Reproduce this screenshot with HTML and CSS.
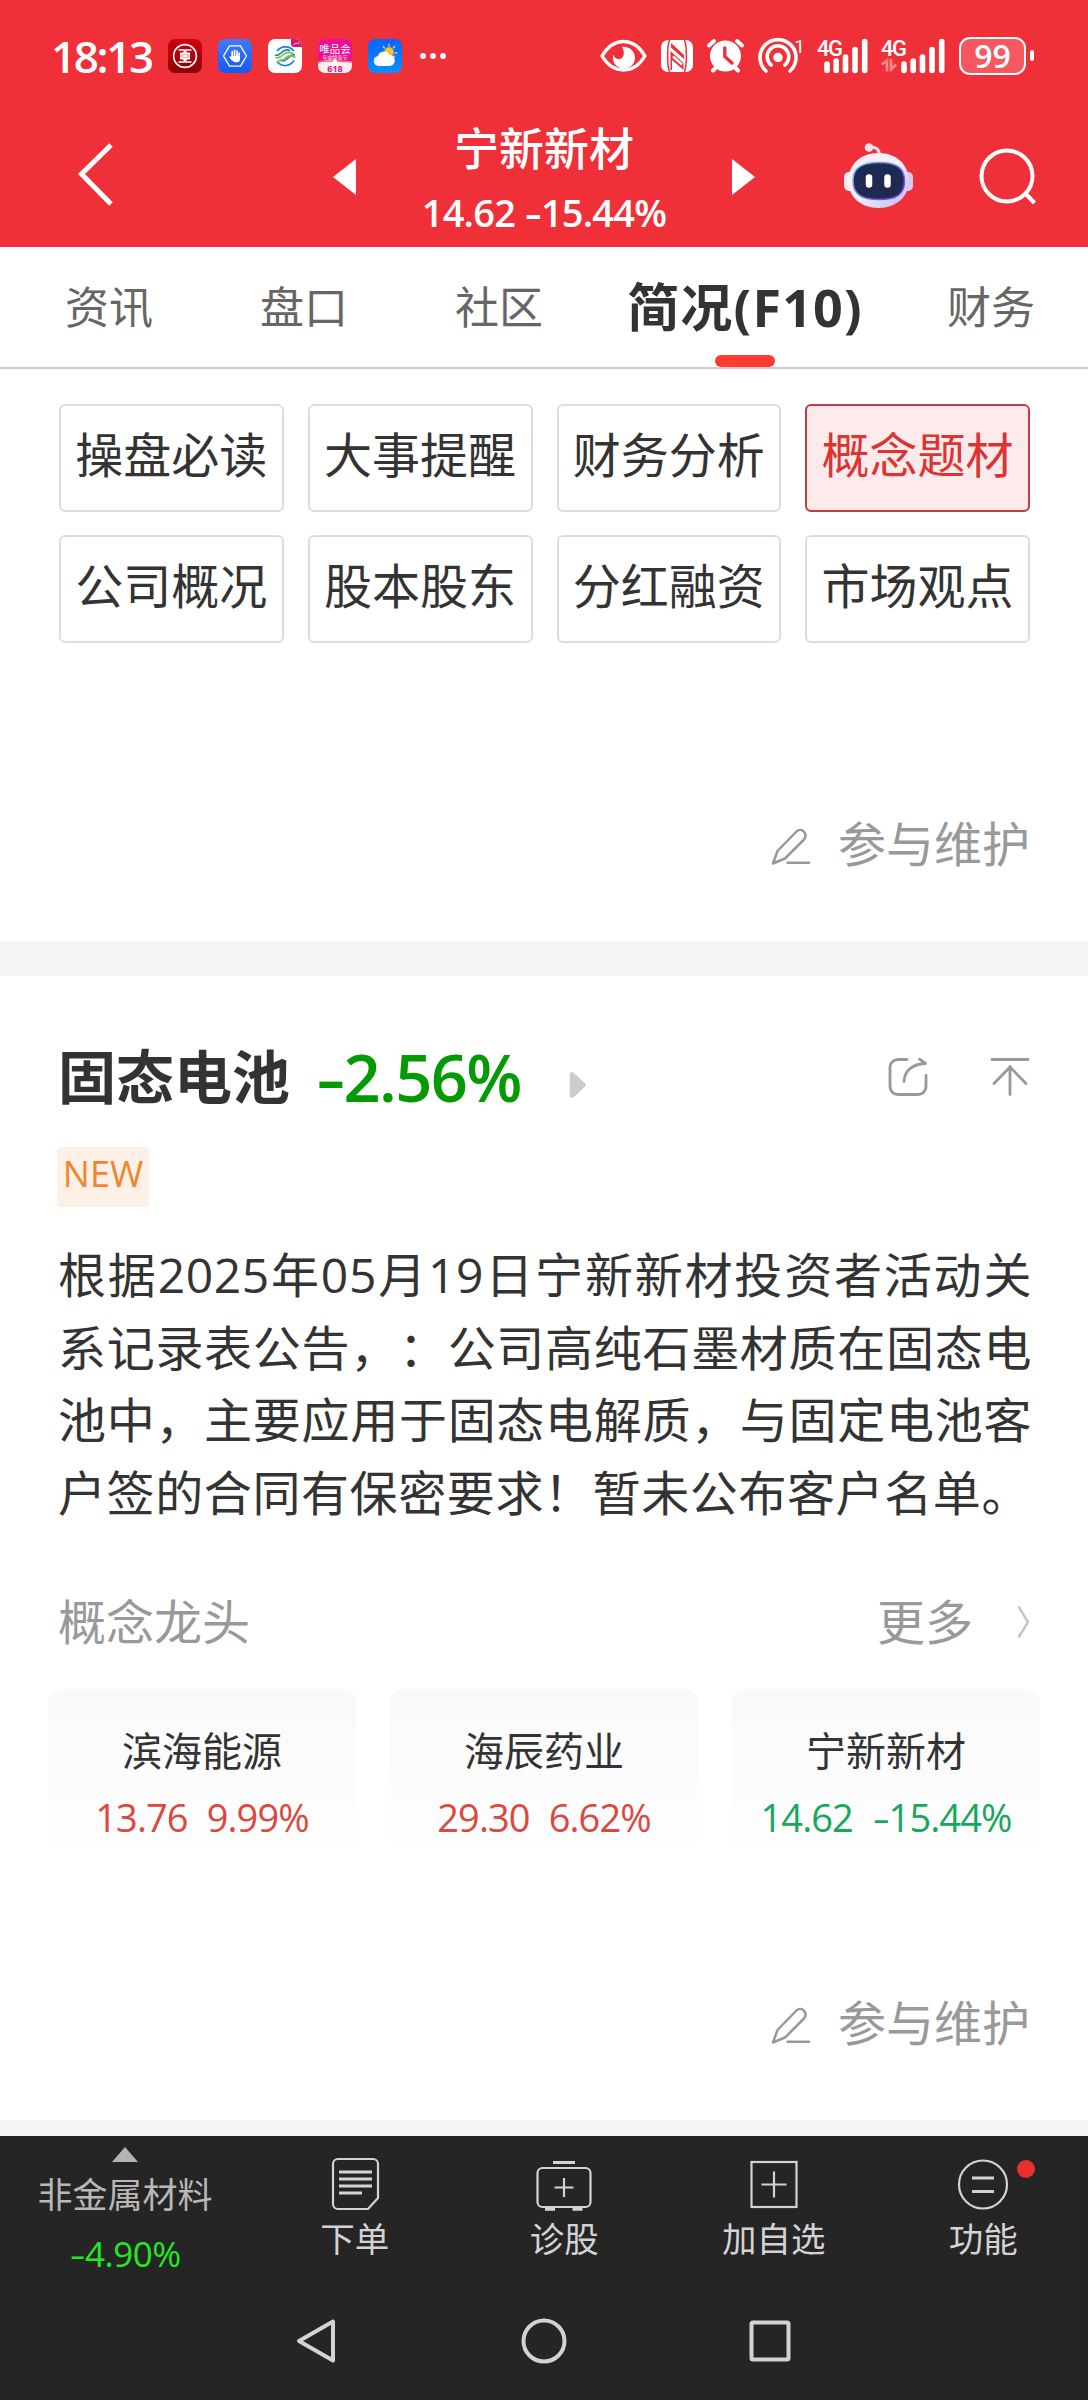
FILE: index.html
```html
<!DOCTYPE html>
<html lang="zh-CN">
<head>
    <meta charset="UTF-8">
    <meta name="viewport" content="width=device-width, initial-scale=1.0">
    <title>宁新新材 - 简况(F10)</title>
    <link rel="stylesheet" href="styles.css">
</head>
<body>
    <header class="header">
        <div class="status-bar">
            <span class="time">18:13</span>
            <div class="apps">
                <!-- bank -->
                <svg width="34" height="34" viewBox="0 0 34 34">
                    <defs><linearGradient id="bank" x1="0" y1="0" x2="0" y2="1"><stop offset="0" stop-color="#d0000f"/><stop offset="1" stop-color="#8c0003"/></linearGradient></defs>
                    <rect width="34" height="34" rx="7" fill="url(#bank)"/>
                    <circle cx="17" cy="17" r="11.4" fill="none" stroke="#fff" stroke-width="1.6"/>
                    <path d="M10.500 11h5.700v3.300h-3.500v1.700h3.500v2h-3.500v1.700h3.500V23h-5.700M23.500 11h-5.700v3.300h3.500v1.700h-3.500v2h3.500v1.700h-3.500V23h5.700" fill="none" stroke="#fff" stroke-width="1.500"/>
                </svg>
                <!-- blocker -->
                <svg width="34" height="34" viewBox="0 0 34 34">
                    <defs><linearGradient id="block" x1="0" y1="0" x2="0" y2="1"><stop offset="0" stop-color="#3f7bf5"/><stop offset="1" stop-color="#155af0"/></linearGradient></defs>
                    <rect width="34" height="34" rx="7" fill="url(#block)"/>
                    <path d="M11.5 6.8h11L28.5 17l-6 10.2h-11L5.500 17z" fill="none" stroke="#fff" stroke-width="1.3" stroke-linejoin="round"/>
                    <path d="M14.200 18v-5.500M16.600 17v-5.600M19 17v-5M21.100 18v-3.800M12.300 18.200l2 2.500" fill="none" stroke="#fff" stroke-width="1.7" stroke-linecap="round"/>
                    <path d="M13.400 17h8.600v3.200c0 1.800-1.300 3-3 3h-1.500c-1.500 0-2.800-1-4.100-3z" fill="#fff"/>
                </svg>
                <!-- mobile carrier -->
                <svg width="34" height="34" viewBox="0 0 34 34">
                    <rect width="34" height="34" rx="7" fill="#fff"/>
                    <path d="M23 0h4a7 7 0 0 1 7 7v1h-8a3 3 0 0 1-3-3z" fill="#d6147c"/>
                    <path d="M25.500 5.500l3-1.500 1 1 2-2" fill="none" stroke="#ffc5e3" stroke-width="1"/>
                    <path d="M9 12c4-5 12-6 17 0M7 16c2 1 4 0 6-2 3-3 6-4 9-2M9 22.500c5 6 13 5 17-1M12 21c4 2 6 0 8-2s4-4 7-3" fill="none" stroke="#1a86c8" stroke-width="1.700"/>
                    <path d="M7.500 18.500c3 1 5 0 8-3s6-3 10-.5M10 21.500c4 1 6-1 8-3 3-3 6-2 9.500 0" fill="none" stroke="#7fc142" stroke-width="1.700"/>
                </svg>
                <!-- shopping -->
                <svg width="34" height="34" viewBox="0 0 34 34">
                    <rect width="34" height="34" rx="7" fill="#f10c96"/>
                    <path d="M0 24q9-5 17-3t17 1v5a7 7 0 0 1-7 7H7a7 7 0 0 1-7-7z" fill="#fff0ee"/>
                    <path d="M0 23q10-2 34 0" fill="none" stroke="#ff6d5c" stroke-width="1.500"/>
                    <path d="M17 19l4 6h-8z" fill="#fff"/>
                    <text x="17" y="13.500" class="vip-name">唯品会</text>
                    <text x="17" y="20" class="vip-sub">年中特卖节</text>
                    <text x="17" y="32.500" class="vip-sale">618</text>
                </svg>
                <!-- weather -->
                <svg width="34" height="34" viewBox="0 0 34 34">
                    <defs><linearGradient id="sky" x1="0" y1="0" x2="0" y2="1"><stop offset="0" stop-color="#0864ff"/><stop offset="1" stop-color="#0a8fff"/></linearGradient></defs>
                    <rect width="34" height="34" rx="7" fill="url(#sky)"/>
                    <circle cx="21" cy="13" r="4.700" fill="#ffc229"/>
                    <path d="M21 7.200V5.200M16.500 9l-1.300-1.500M25.200 9l1.500-1.500M27 14h1.800M25.500 17l1 .9" stroke="#ffd23c" stroke-width="1.300" stroke-linecap="round"/>
                    <path d="M10.500 27a5 5 0 0 1-.6-9.900 6.500 6.500 0 0 1 11.900-1.200A5.600 5.600 0 0 1 22 27z" fill="#fff"/>
                </svg>
            </div>
            <svg class="dots" width="26" height="6" viewBox="0 0 26 6" fill="#fff"><circle cx="3" cy="3" r="2.900"/><circle cx="13" cy="3" r="2.900"/><circle cx="23" cy="3" r="2.900"/></svg>
            <div class="signals">
                <!-- eye comfort -->
                <svg width="47" height="38" viewBox="0 0 47 38">
                    <path d="M2 19C8 9 15 4.500 23.500 4.500S39 9 45 19C39 29 32 33 23.500 33S8 29 2 19z" fill="none" stroke="#fff" stroke-width="3.400" stroke-linejoin="round"/>
                    <path d="M22 10a11 11 0 1 1-8.500 7.500c1 4 3.500 5 6 4.500 5-1 5.500-7 2.500-12z" fill="#fff"/>
                </svg>
                <!-- nfc -->
                <svg width="32" height="38" viewBox="0 0 32 38">
                    <rect y="3" width="32" height="32" rx="7" fill="#fff"/>
                    <path d="M8.500 35C6 28 6 10 8.500 3M23.500 3C26 10 26 28 23.500 35" fill="none" stroke="#f03038" stroke-width="1.500"/>
                    <path d="M10 6l13 12v4L10 10.500zM9.500 14l13 12v7L11 23v10H9.500z" fill="#f03038"/>
                    <path d="M12 19.500l9 8" stroke="#fff" stroke-width="2.500"/>
                </svg>
                <!-- alarm -->
                <svg width="37" height="38" viewBox="0 0 37 38">
                    <circle cx="18.500" cy="19" r="15.500" fill="#fff"/>
                    <path d="M2 8.500L7 4M35 8.500L30 4M6 33.500l4-4M31 33.500l-4-4" stroke="#fff" stroke-width="4" stroke-linecap="round"/>
                    <path d="M17.800 11v8.500l7.200 6.500" fill="none" stroke="#f03038" stroke-width="3.400" stroke-linecap="round"/>
                </svg>
                <!-- hotspot -->
                <svg width="47" height="38" viewBox="0 0 47 38">
                    <g fill="none" stroke="#fff" stroke-width="3.600" stroke-linecap="round">
                        <path d="M8 34A18 18 0 1 1 32 34"/>
                        <path d="M13.200 28A10.800 10.800 0 1 1 26.800 28"/>
                    </g>
                    <circle cx="20" cy="20.500" r="4.700" fill="#fff"/>
                    <text x="41.500" y="16" class="hot-count">1</text>
                </svg>
                <svg class="sig1" width="51" height="38" viewBox="0 0 51 38">
                    <text x="0" y="18.500" class="net">4G</text>
                    <path d="M10 27v6.500M19.200 24v9.500M28.500 20v13.500M38 12.500v21M47.700 4.500v29" stroke="#fff" stroke-width="5.600" stroke-linecap="round"/>
                </svg>
                <svg width="64" height="38" viewBox="0 0 64 38">
                    <text x="0" y="18.500" class="net">4G</text>
                    <path d="M1 27.500l5-4v11M15 27.500l-5 5v-10.500" fill="none" stroke="#f9888c" stroke-width="2.600"/>
                    <path d="M23 27v6.500M32.200 24v9.500M41.500 20v13.500M51 12.500v21M60.700 4.500v29" stroke="#fff" stroke-width="5.600" stroke-linecap="round"/>
                </svg>
                <div class="battery">99</div>
            </div>
        </div>
        <div class="nav-bar">
            <svg class="back" width="36" height="64" viewBox="0 0 36 64"><path d="M33 2L3.500 31 33 61" fill="none" stroke="#fff" stroke-width="5"/></svg>
            <svg class="prev" width="23" height="36" viewBox="0 0 23 36"><path d="M0 18L23 0v36z" fill="#fff"/></svg>
            <div class="stock">
                <div class="stock-name">宁新新材</div>
                <div class="stock-price">14.62 <i>-</i>15.44%</div>
            </div>
            <svg class="next" width="23" height="36" viewBox="0 0 23 36"><path d="M23 18L0 0v36z" fill="#fff"/></svg>
            <svg class="robot" width="70" height="66" viewBox="0 0 70 66">
                <defs>
                    <linearGradient id="shell" x1="0" y1="0" x2="1" y2="1"><stop offset="0" stop-color="#fdeef2"/><stop offset=".5" stop-color="#f3eefc"/><stop offset="1" stop-color="#b9baf3"/></linearGradient>
                    <linearGradient id="rim" x1="0" y1="0" x2="1" y2="1"><stop offset="0" stop-color="#67c6ea"/><stop offset="1" stop-color="#7a31dd"/></linearGradient>
                </defs>
                <path d="M26 4.500c6-1 9.500 2 9.500 8" fill="none" stroke="#fbdfe7" stroke-width="3"/>
                <circle cx="25" cy="4.500" r="4.300" fill="#fbdfe7"/>
                <rect x="0" y="29" width="12" height="19" rx="5" fill="#f7e9f5"/>
                <rect x="57" y="29" width="12" height="19" rx="5" fill="#d5c8f3"/>
                <path d="M34.500 10C52 10 64 21 65 37c0 17-13 28-30.500 28S4 54 4 37C5 21 17 10 34.500 10z" fill="url(#shell)"/>
                <path d="M35 19.500c17 0 25.500 5 25.500 18.500S52 56.500 35 56.500 9 51.500 9 38s9-18.500 26-18.500z" fill="#1f2a52" stroke="url(#rim)" stroke-width="1.500"/>
                <path d="M25 34.500v7M43.500 34.500v7" stroke="#fff" stroke-width="6.500" stroke-linecap="round"/>
            </svg>
            <svg class="search" width="58" height="60" viewBox="0 0 58 60"><g fill="none" stroke="#fff" stroke-width="4"><circle cx="28" cy="29" r="25.500"/><path d="M46 46l9.500 10"/></g></svg>
        </div>
    </header>

    <nav class="tabs">
        <a class="tab">资讯</a>
        <a class="tab">盘口</a>
        <a class="tab">社区</a>
        <a class="tab active">简况(F10)</a>
        <a class="tab">财务</a>
    </nav>

    <section class="menu">
        <div class="chips">
            <a class="chip">操盘必读</a>
            <a class="chip">大事提醒</a>
            <a class="chip">财务分析</a>
            <a class="chip on">概念题材</a>
            <a class="chip">公司概况</a>
            <a class="chip">股本股东</a>
            <a class="chip">分红融资</a>
            <a class="chip">市场观点</a>
        </div>
        <div class="maintain">
            <svg width="40" height="38" viewBox="0 0 40 38"><g fill="none" stroke="#999" stroke-width="2.500" stroke-linecap="round" stroke-linejoin="round"><path d="M2 35.500L6.500 23 25.500 3.500c5-4.500 12 2 7.500 8L14 30.500z"/><path d="M16.500 34.700h21.500"/></g></svg>
            <span>参与维护</span>
        </div>
    </section>

    <section class="concept">
        <div class="concept-head">
            <h2>固态电池</h2>
            <span class="change"><i>-</i>2.56%</span>
            <svg class="play" width="17" height="28" viewBox="0 0 17 28"><path d="M3 3.500v21L14.500 14z" fill="#ccc" stroke="#ccc" stroke-width="4.500" stroke-linejoin="round"/></svg>
            <svg class="share" width="40" height="40" viewBox="0 0 40 40"><g fill="none" stroke="#999" stroke-width="2.800" stroke-linecap="round" stroke-linejoin="round"><path d="M19 2.500H10a8 8 0 0 0-8 8v19a8 8 0 0 0 8 8h20a8 8 0 0 0 8-8V18.500"/><path d="M16 24.500C16.500 14 24 7 37.500 6.500L31.500 2.200"/></g></svg>
            <svg class="to-top" width="40" height="40" viewBox="0 0 40 40"><path d="M2 2.500h36M20 37.500V9.500M4 26.500l16-16.500 16 16.500" fill="none" stroke="#999" stroke-width="2.800" stroke-linecap="round" stroke-linejoin="round"/></svg>
        </div>
        <div class="tag">NEW</div>
        <p class="desc">根据2025年05月19日宁新新材投资者活动关系记录表公告，：公司高纯石墨材质在固态电池中，主要应用于固态电解质，与固定电池客户签的合同有保密要求！暂未公布客户名单。</p>
        <div class="leader-head">
            <span>概念龙头</span>
            <span class="more">更多</span>
            <svg width="13" height="34" viewBox="0 0 13 34"><path d="M1.500 1.500L11 17 1.500 32.500" fill="none" stroke="#c4c4c4" stroke-width="2.400"/></svg>
        </div>
        <div class="leaders">
            <div class="leader">
                <div class="leader-name">滨海能源</div>
                <div class="leader-value up"><span>13.76</span><span>9.99%</span></div>
            </div>
            <div class="leader">
                <div class="leader-name">海辰药业</div>
                <div class="leader-value up"><span>29.30</span><span>6.62%</span></div>
            </div>
            <div class="leader">
                <div class="leader-name">宁新新材</div>
                <div class="leader-value down"><span>14.62</span><span><i>-</i>15.44%</span></div>
            </div>
        </div>
        <div class="maintain">
            <svg width="40" height="38" viewBox="0 0 40 38"><g fill="none" stroke="#999" stroke-width="2.500" stroke-linecap="round" stroke-linejoin="round"><path d="M2 35.500L6.500 23 25.500 3.500c5-4.500 12 2 7.500 8L14 30.500z"/><path d="M16.500 34.700h21.500"/></g></svg>
            <span>参与维护</span>
        </div>
    </section>

    <footer class="footer">
        <div class="toolbar">
            <div class="sector">
                <svg width="26" height="15" viewBox="0 0 26 15"><path d="M13 0l13 15H0z" fill="#b3b3b3"/></svg>
                <div class="sector-name">非金属材料</div>
                <div class="sector-change"><i>-</i>4.90%</div>
            </div>
            <a class="tool">
                <svg width="56" height="56" viewBox="0 0 56 56" fill="none" stroke="#d3d3d3" stroke-width="2.200"><path d="M11 3h35a5 5 0 0 1 5 5v34l-10 11h-30a5 5 0 0 1-5-5V8a5 5 0 0 1 5-5z"/><path d="M12 16h33M12 23h33M12 30h33M12 37h23" stroke-width="2.800"/></svg>
                <span>下单</span>
            </a>
            <a class="tool">
                <svg width="56" height="56" viewBox="0 0 56 56" fill="none" stroke="#d3d3d3" stroke-width="2.200"><rect x="1.500" y="12" width="53" height="39" rx="5"/><path d="M17 6.500h22" stroke-width="3"/><path d="M9 53h10M36.500 53h10" stroke-width="3.500"/><path d="M28 22v19M18.500 31.500h19"/></svg>
                <span>诊股</span>
            </a>
            <a class="tool">
                <svg width="56" height="56" viewBox="0 0 56 56" fill="none" stroke="#d3d3d3" stroke-width="2.200"><rect x="5.500" y="6" width="45" height="45"/><path d="M28 15.500v26M15.500 28.500h25"/></svg>
                <span>加自选</span>
            </a>
            <a class="tool">
                <svg width="56" height="56" viewBox="0 0 56 56" fill="none" stroke="#d3d3d3" stroke-width="2.200"><circle cx="28" cy="28.500" r="24"/><path d="M17 22h22M17 35.500h22" stroke-width="2.800"/></svg>
                <span>功能</span>
                <b class="badge"></b>
            </a>
        </div>
        <div class="system-keys">
            <svg width="46" height="48" viewBox="0 0 46 48"><path d="M38 4.500v39L4 24z" fill="none" stroke="#d3d3d3" stroke-width="4" stroke-linejoin="round"/></svg>
            <svg width="46" height="48" viewBox="0 0 46 48"><circle cx="23" cy="24" r="20.500" fill="none" stroke="#d3d3d3" stroke-width="4"/></svg>
            <svg width="46" height="48" viewBox="0 0 46 48"><rect x="4.500" y="5.500" width="37" height="37" rx="1.500" fill="none" stroke="#d3d3d3" stroke-width="4"/></svg>
        </div>
    </footer>
</body>
</html>
```

FILE: styles.css
```css
* {
    box-sizing: border-box;
}

body {
    margin: 0;
    width: 1088px;
    height: 2400px;
    overflow: hidden;
    font-family: "Open Sans", "Noto Sans CJK SC", sans-serif;
    color: #333;
    background: #fff;
}

svg {
    display: block;
    flex: none;
}

/* wide minus sign */
i {
    display: inline-block;
    font-style: normal;
    transform: scaleX(1.4);
    margin: 0 .07em;
}

/* header */
.header {
    height: 247px;
    background: #f03038;
    color: #fff;
}

.status-bar {
    display: flex;
    align-items: center;
    height: 112px;
    padding: 0 54px 0 51px;
}

.time {
    width: 117px;
    font-size: 44px;
    font-weight: 600;
    letter-spacing: -2.4px;
    line-height: 60px;
    white-space: nowrap;
}

.apps {
    display: flex;
    gap: 16px;
}

.vip-name,
.vip-sub,
.vip-sale {
    fill: #fff;
    text-anchor: middle;
    font-size: 10.5px;
}

.vip-sub {
    font-size: 5px;
}

.vip-sale {
    fill: #d6118a;
    font-size: 9px;
    font-weight: 700;
}

.dots {
    margin-left: 18px;
}

.signals {
    display: flex;
    align-items: center;
    gap: 14px;
    margin-left: auto;
}

.sig1 {
    margin: 0 -1px 0 -2px;
}

.net {
    fill: #fff;
    font-family: Roboto, sans-serif;
    font-size: 22px;
    font-weight: 500;
    letter-spacing: -1.5px;
}

.hot-count {
    fill: #fff;
    font-family: Roboto, sans-serif;
    font-size: 19px;
    text-anchor: middle;
}

.battery {
    position: relative;
    width: 67px;
    height: 38px;
    margin-right: 8px;
    border: 2.500px solid #fff;
    border-radius: 11px;
    background: #f5595f;
    font-size: 32px;
    font-weight: 600;
    line-height: 33px;
    text-align: center;
}

.battery::after {
    content: "";
    position: absolute;
    right: -10px;
    top: 11px;
    width: 4px;
    height: 11px;
    border-radius: 2px;
    background: #fff;
}

.nav-bar {
    display: flex;
    align-items: flex-start;
    height: 135px;
    padding-left: 78px;
}

.back {
    margin-top: 31px;
}

.prev {
    margin: 47px 0 0 219px;
}

.next {
    margin-top: 47px;
}

.stock {
    width: 376px;
    padding-top: 5px;
    text-align: center;
    white-space: nowrap;
}

.stock-name {
    font-size: 45px;
    font-weight: 500;
    line-height: 64px;
}

.stock-price {
    font-size: 38px;
    font-weight: 600;
    letter-spacing: -.8px;
    line-height: 62px;
}

.robot {
    margin: 31px 0 0 89px;
}

.search {
    margin: 35px 0 0 65px;
}

/* tabs */
.tabs {
    display: flex;
    align-items: center;
    gap: 107px;
    height: 122px;
    padding-left: 65px;
    border-bottom: 2px solid #ccc;
}

.tab {
    position: relative;
    color: #666;
    font-size: 44px;
    line-height: 120px;
    white-space: nowrap;
}

.tab.active {
    width: 238px;
    margin: 0 -24px;
    color: #333;
    font-size: 52px;
    font-weight: 700;
    letter-spacing: 1.2px;
    text-align: center;
}

.tab.active::after {
    content: "";
    position: absolute;
    left: 50%;
    bottom: 0;
    width: 60px;
    height: 12px;
    margin-left: -30px;
    border-radius: 6px;
    background: #fc3b31;
}

/* menu */
.menu {
    height: 572px;
    padding: 35px 58px 0 59px;
}

.chips {
    display: grid;
    grid-template-columns: repeat(4, 1fr);
    gap: 23px 24px;
}

.chip {
    height: 108px;
    border: 2px solid #ddd;
    border-radius: 6px;
    font-size: 48px;
    line-height: 98px;
    text-align: center;
    white-space: nowrap;
}

.chip.on {
    border-color: #c23c41;
    background: #fdeaea;
    color: #dd3333;
}

.maintain {
    display: flex;
    align-items: center;
    justify-content: flex-end;
    gap: 27px;
    margin-top: 171px;
    color: #999;
    font-size: 48px;
    line-height: 60px;
}

.maintain svg {
    margin-top: 6px;
}

/* concept */
.concept {
    height: 1195px;
    border-top: 35px solid #f4f4f4;
    border-bottom: 16px solid #f4f4f4;
    padding: 68px 58px 0;
}

.concept-head {
    display: flex;
    align-items: center;
    height: 66px;
}

.concept-head h2 {
    margin: 0;
    font-size: 58px;
    font-weight: 700;
    line-height: 66px;
}

.change {
    width: 211px;
    margin-left: 25px;
    color: #039a03;
    font-size: 65px;
    font-weight: 600;
    letter-spacing: -1.6px;
    line-height: 66px;
    white-space: nowrap;
}

.play {
    margin: 15px 0 0 43px;
}

.share {
    margin-left: auto;
}

.to-top {
    margin-left: 62px;
}

.tag {
    width: 92px;
    height: 60px;
    margin: 37px 0 0 -1px;
    border-radius: 4px;
    background: #fff0e6;
    color: #ef8632;
    font-size: 36px;
    line-height: 53px;
    text-align: center;
}

.desc {
    margin: 32px -2px 0 0;
    font-size: 48px;
    letter-spacing: .6px;
    line-height: 72.700px;
    text-align: justify;
    text-spacing-trim: space-all;
}

.leader-head {
    display: flex;
    align-items: center;
    margin-top: 62px;
    color: #999;
    font-size: 48px;
    line-height: 60px;
}

.more {
    margin: 0 44px 0 auto;
}

.leaders {
    display: grid;
    grid-template-columns: repeat(3, 1fr);
    gap: 34px;
    margin: 37px -10px 0;
}

.leader {
    height: 176px;
    padding-top: 33px;
    border-radius: 14px 14px 0 0;
    background: linear-gradient(#f9f9f9, #fff);
    text-align: center;
}

.leader-name {
    font-size: 40px;
    line-height: 58px;
}

.leader-value {
    display: flex;
    justify-content: center;
    gap: 19px;
    font-size: 38px;
    letter-spacing: -.9px;
    line-height: 74px;
    white-space: nowrap;
}

.up {
    color: #dc4840;
}

.down {
    color: #13a85a;
}

.concept .maintain {
    margin-top: 128px;
}

/* footer */
.footer {
    height: 264px;
    background: #252525;
    color: #d3d3d3;
}

.toolbar {
    display: flex;
    height: 159px;
}

.sector {
    display: flex;
    flex-direction: column;
    align-items: center;
    width: 250px;
    padding-top: 11px;
    color: #b8b8b8;
    font-size: 35px;
}

.sector-name {
    margin-top: 9px;
    line-height: 48px;
}

.sector-change {
    margin-top: 10px;
    color: #23e823;
    letter-spacing: -.5px;
    line-height: 50px;
}

.tool {
    position: relative;
    display: flex;
    flex: 1;
    flex-direction: column;
    align-items: center;
    padding-top: 20px;
    font-size: 34.500px;
    line-height: 54px;
}

.badge {
    position: absolute;
    left: 138px;
    top: 24px;
    width: 18px;
    height: 18px;
    border-radius: 50%;
    background: #e8302f;
}

.system-keys {
    display: flex;
    justify-content: center;
    gap: 180px;
    padding-top: 22px;
}
```
